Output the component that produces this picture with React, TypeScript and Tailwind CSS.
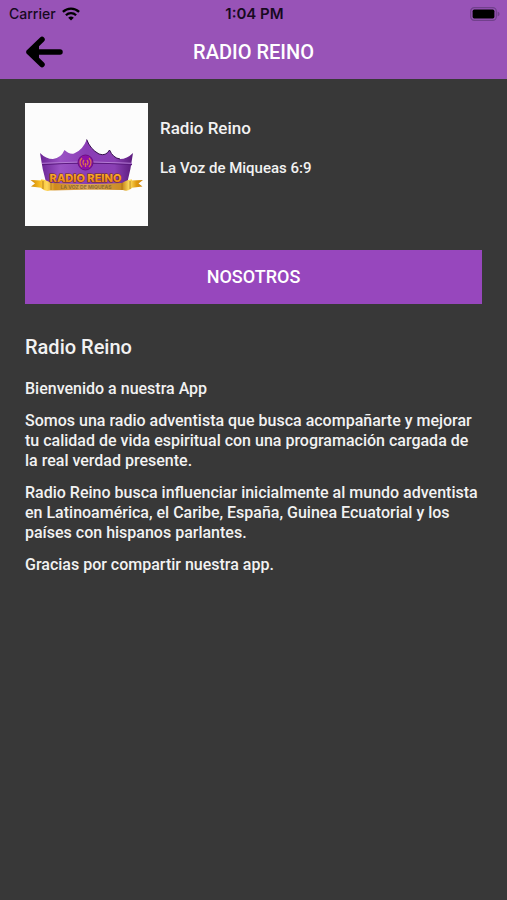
import React from 'react';

const station = {
  name: 'Radio Reino',
  slogan: 'La Voz de Miqueas 6:9',
};

const paragraphs = [
  'Bienvenido a nuestra App',
  'Somos una radio adventista que busca acompañarte y mejorar tu calidad de vida espiritual con una programación cargada de la real verdad presente.',
  'Radio Reino busca influenciar inicialmente al mundo adventista en Latinoamérica, el Caribe, España, Guinea Ecuatorial y los países con hispanos parlantes.',
  'Gracias por compartir nuestra app.',
];

function StatusBar() {
  return (
    <div className="grid grid-cols-3 items-center h-[27px] pl-[9px] pr-[7px] text-sm text-[#170a1f] font-['Inter',sans-serif]">
      <div className="flex items-center gap-[6px]">
        <span>Carrier</span>
        <svg viewBox="0 0 18 14" className="w-[18px] h-[14px]" fill="none" stroke="black" strokeWidth="2.3" aria-hidden="true">
          <path d="M0.9 4.9a11.6 11.6 0 0 1 16.2 0" />
          <path d="M3.9 8.2a7.3 7.3 0 0 1 10.2 0" />
          <path d="M9 13.6 6.2 10.8a4 4 0 0 1 5.6 0Z" fill="black" stroke="none" />
        </svg>
      </div>
      <span className="text-center text-[15px] font-semibold">1:04 PM</span>
      <svg viewBox="0 0 30 14" className="w-[30px] h-[14px] justify-self-end" aria-hidden="true">
        <rect x="0.7" y="0.7" width="25.6" height="12.6" rx="3.6" fill="none" stroke="#71408c" strokeWidth="1.2" />
        <rect x="2.6" y="2.6" width="21.8" height="8.8" rx="1.6" fill="black" />
        <path d="M27.6 4.6q2 0.8 2 2.4t-2 2.4Z" fill="#71408c" />
      </svg>
    </div>
  );
}

function Logo() {
  return (
    <svg viewBox="0 0 123 123" className="w-[123px] h-[123px] shrink-0 bg-[#fcfcfc]" role="img" aria-label="Logo de Radio Reino">
      <defs>
        <linearGradient id="crown" x1="0" y1="0" x2="1" y2="0">
          <stop offset="0" stopColor="#6a2494" />
          <stop offset="0.22" stopColor="#9a52c4" />
          <stop offset="0.5" stopColor="#8a3eb6" />
          <stop offset="0.8" stopColor="#8a40b4" />
          <stop offset="1" stopColor="#5a1b7c" />
        </linearGradient>
        <linearGradient id="gold" gradientUnits="userSpaceOnUse" x1="5" y1="0" x2="118" y2="0">
          <stop offset="0" stopColor="#c98108" />
          <stop offset="0.08" stopColor="#f5b81e" />
          <stop offset="0.15" stopColor="#ffd75a" />
          <stop offset="0.22" stopColor="#d08a1c" />
          <stop offset="0.5" stopColor="#dca65c" />
          <stop offset="0.82" stopColor="#c98a20" />
          <stop offset="0.88" stopColor="#ffe062" />
          <stop offset="0.94" stopColor="#e09a10" />
          <stop offset="1" stopColor="#c98108" />
        </linearGradient>
        <linearGradient id="letters" x1="0" y1="0" x2="0" y2="1">
          <stop offset="0" stopColor="#ffb935" />
          <stop offset="1" stopColor="#e8760c" />
        </linearGradient>
      </defs>
      {/* Corona */}
      <path
        d="M15 50Q21 56 28 56Q36 55 39.500 47Q44 51.500 49 50.500Q58 47 61.700 36.500Q65 46 74 51Q81 53.500 84.500 47Q88 55 95 56Q102 56 108 50Q106 66 101.500 83H22Q17 66 15 50Z"
        fill="url(#crown)"
      />
      <path d="M61.700 36.500Q65 46 74 51Q81 53.500 84.500 47Q88 55 95 56" fill="none" stroke="#350f4d" strokeWidth="1" />
      <path d="M17 61.500Q62 58.500 107 61.500" fill="none" stroke="#5b1a80" strokeWidth="1.500" />
      <path d="M17 60.300Q62 57.300 107 60.300" fill="none" stroke="#b47bd4" strokeWidth="1" />
      {/* Emblema */}
      <circle cx="60.500" cy="59.500" r="7.500" fill="#8d0fa8" stroke="#6a117f" strokeWidth="1" />
      <g fill="none" stroke="#d97350" strokeWidth="1.300">
        <path d="M57 55q-4 4.500 0 9M64 55q4 4.500 0 9" />
        <path d="M59 57q-2 2.500 0 5M62 57q2 2.500 0 5" />
        <path d="M60.500 60v4" />
      </g>
      {/* Cinta */}
      <path d="M5.500 77L18 77.500V85L6 83.500L10 80.500ZM118 77L105 77.500V85L117.500 83.500L113.500 80.500Z" fill="url(#gold)" />
      <path d="M16 76.500Q20 76 26 80Q61 82 97 80Q103 76 107 76.500V85Q103 89 98 87Q61 86.500 25 87.500Q20 89 16 85Z" fill="url(#gold)" />
      <path d="M18 78v8M26 80v7M97 80v7M105 78v8" stroke="#a86c14" strokeWidth="0.800" />
      <text x="60.500" y="79" textAnchor="middle" fill="url(#letters)" stroke="#6b2a10" strokeWidth="1" paintOrder="stroke" className="text-[11px] font-extrabold font-['Inter',sans-serif]">
        RADIO REINO
      </text>
      <text x="61" y="86" textAnchor="middle" fill="#8f6a30" className="text-[5px] font-bold font-['Inter',sans-serif]">
        LA VOZ DE MIQUEAS
      </text>
    </svg>
  );
}

export default function App() {
  return (
    <div className="min-h-screen bg-[#383838] text-[#f2f2f2] font-medium font-['Roboto',sans-serif]">
      <header className="bg-[#9853b7] pb-[2px]">
        <StatusBar />
        <div className="grid grid-cols-[48px_1fr_48px] items-center h-[50px] px-5">
          <button type="button" aria-label="Volver" className="flex justify-center">
            <svg viewBox="0 0 38 32" className="w-[38px] h-8" fill="none" stroke="black" strokeWidth="5.500" strokeLinecap="round" strokeLinejoin="round" aria-hidden="true">
              <path d="M17 3.500L4 16L17 28.500M4 16H35" />
              <path d="M5 16L14 9V23Z" fill="black" stroke="none" />
            </svg>
          </button>
          <h1 className="text-center text-xl text-white">RADIO REINO</h1>
        </div>
      </header>

      <main className="px-[25px] pt-6 pb-8">
        {/* Ficha de la emisora */}
        <section className="flex gap-3">
          <Logo />
          <div className="pt-[11px]">
            <h2 className="text-[17px] leading-7">{station.name}</h2>
            <p className="mt-4 text-[15px] leading-5">{station.slogan}</p>
          </div>
        </section>

        <button type="button" className="mt-6 w-full h-[54px] bg-[#9747bd] text-lg text-white">
          NOSOTROS
        </button>

        {/* Nosotros */}
        <section className="mt-[29px]">
          <h2 className="text-xl leading-7">{station.name}</h2>
          <div className="mt-[18px] space-y-3 text-base leading-5">
            {paragraphs.map((text, idx) => (
              <p key={idx}>{text}</p>
            ))}
          </div>
        </section>
      </main>
    </div>
  );
}
